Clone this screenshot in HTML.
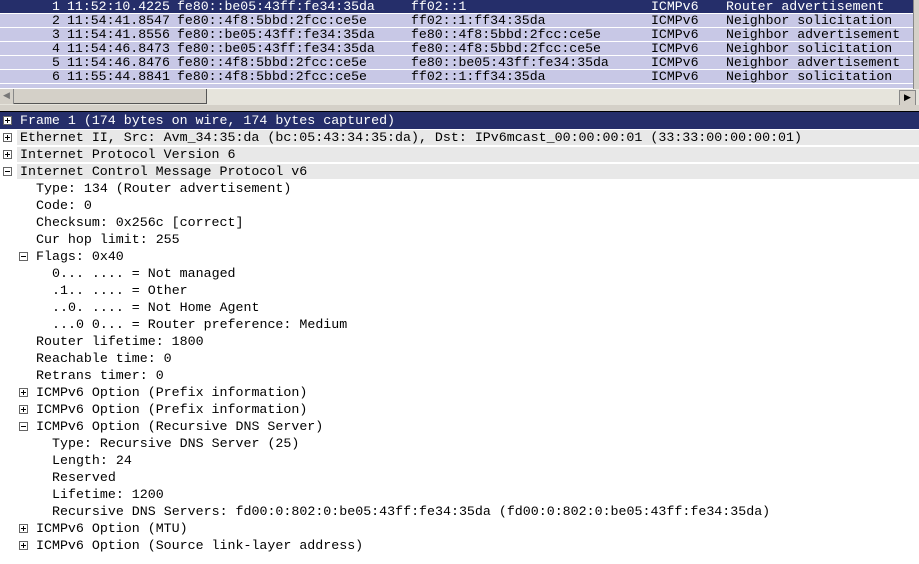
<!DOCTYPE html>
<html><head><style>
body{margin:0;width:919px;height:564px;overflow:hidden;background:#fff;font-family:"Liberation Mono",monospace;font-size:13px;position:relative}
.pr{position:absolute;left:0;width:913px;height:13px;background:#c8c8e6;color:#000;line-height:13px;white-space:pre;font-size:13.2px}
.pr.sel{background:#252e6a;color:#fff}
.pr span{position:absolute;top:0}
.t{position:absolute;height:17px;line-height:17px;white-space:pre;color:#000;font-size:13.3px}
.bg{position:absolute;left:17px;right:0;height:15px;background:#e8e8e8}
.box{position:absolute;width:7px;height:7px;border:1px solid #666;background:#fff}
.box:before{content:"";position:absolute;left:1px;top:3px;width:5px;height:1px;background:#000}
.box.p:after{content:"";position:absolute;left:3px;top:1px;width:1px;height:5px;background:#000}
</style></head><body>
<div class="pr sel" style="top:0"><span style="left:52px">1</span><span style="left:67px">11:52:10.4225</span><span style="left:177px">fe80::be05:43ff:fe34:35da</span><span style="left:411px">ff02::1</span><span style="left:651px">ICMPv6</span><span style="left:726px">Router advertisement</span></div>
<div class="pr" style="top:14px"><span style="left:52px">2</span><span style="left:67px">11:54:41.8547</span><span style="left:177px">fe80::4f8:5bbd:2fcc:ce5e</span><span style="left:411px">ff02::1:ff34:35da</span><span style="left:651px">ICMPv6</span><span style="left:726px">Neighbor solicitation</span></div>
<div class="pr" style="top:28px"><span style="left:52px">3</span><span style="left:67px">11:54:41.8556</span><span style="left:177px">fe80::be05:43ff:fe34:35da</span><span style="left:411px">fe80::4f8:5bbd:2fcc:ce5e</span><span style="left:651px">ICMPv6</span><span style="left:726px">Neighbor advertisement</span></div>
<div class="pr" style="top:42px"><span style="left:52px">4</span><span style="left:67px">11:54:46.8473</span><span style="left:177px">fe80::be05:43ff:fe34:35da</span><span style="left:411px">fe80::4f8:5bbd:2fcc:ce5e</span><span style="left:651px">ICMPv6</span><span style="left:726px">Neighbor solicitation</span></div>
<div class="pr" style="top:56px"><span style="left:52px">5</span><span style="left:67px">11:54:46.8476</span><span style="left:177px">fe80::4f8:5bbd:2fcc:ce5e</span><span style="left:411px">fe80::be05:43ff:fe34:35da</span><span style="left:651px">ICMPv6</span><span style="left:726px">Neighbor advertisement</span></div>
<div class="pr" style="top:70px"><span style="left:52px">6</span><span style="left:67px">11:55:44.8841</span><span style="left:177px">fe80::4f8:5bbd:2fcc:ce5e</span><span style="left:411px">ff02::1:ff34:35da</span><span style="left:651px">ICMPv6</span><span style="left:726px">Neighbor solicitation</span></div>
<div class="pr" style="top:84px;height:4px"></div>
<div style="position:absolute;left:913px;top:0;width:6px;height:90px;background:#d4d0c8;border-left:1px solid #888"></div>
<div style="position:absolute;left:0;top:89px;width:919px;height:16px;background:#e6e4dc"></div>
<div style="position:absolute;left:0;top:89px;width:13px;height:15px;background:#d4d0c8;border-right:1px solid #888;color:#777;font-size:9px;line-height:15px;text-align:center">◀</div>
<div style="position:absolute;left:14px;top:89px;width:192px;height:14px;background:#d4d0c8;border-right:1px solid #555;border-bottom:1px solid #555"></div>
<div style="position:absolute;left:899px;top:90px;width:15px;height:14px;background:#d4d0c8;border:1px solid #888;color:#000;font-size:9px;line-height:14px;text-align:center">▶</div>
<div style="position:absolute;left:0;top:105px;width:919px;height:6px;background:#d4d0c8"></div>
<div style="position:absolute;left:0;top:111px;width:919px;height:1px;background:#000"></div>
<div style="position:absolute;left:0;top:112px;width:919px;height:17px;background:#252e6a"></div>
<div id="tree"></div>
<script>
var rows=[
[0,'p','Frame 1 (174 bytes on wire, 174 bytes captured)',1],
[0,'p','Ethernet II, Src: Avm_34:35:da (bc:05:43:34:35:da), Dst: IPv6mcast_00:00:00:01 (33:33:00:00:00:01)'],
[0,'p','Internet Protocol Version 6'],
[0,'m','Internet Control Message Protocol v6'],
[1,'','Type: 134 (Router advertisement)'],
[1,'','Code: 0'],
[1,'','Checksum: 0x256c [correct]'],
[1,'','Cur hop limit: 255'],
[1,'m','Flags: 0x40'],
[2,'','0... .... = Not managed'],
[2,'','.1.. .... = Other'],
[2,'','..0. .... = Not Home Agent'],
[2,'','...0 0... = Router preference: Medium'],
[1,'','Router lifetime: 1800'],
[1,'','Reachable time: 0'],
[1,'','Retrans timer: 0'],
[1,'p','ICMPv6 Option (Prefix information)'],
[1,'p','ICMPv6 Option (Prefix information)'],
[1,'m','ICMPv6 Option (Recursive DNS Server)'],
[2,'','Type: Recursive DNS Server (25)'],
[2,'','Length: 24'],
[2,'','Reserved'],
[2,'','Lifetime: 1200'],
[2,'','Recursive DNS Servers: fd00:0:802:0:be05:43ff:fe34:35da (fd00:0:802:0:be05:43ff:fe34:35da)'],
[1,'p','ICMPv6 Option (MTU)'],
[1,'p','ICMPv6 Option (Source link-layer address)']];
var h='';
rows.forEach(function(r,i){var y=112+i*17;var x=20+r[0]*16;
if(r[0]==0&&!r[3])h+='<div class="bg" style="top:'+(y+1)+'px"></div>';
if(r[1])h+='<div class="box '+r[1]+'" style="left:'+(x-17)+'px;top:'+(y+4)+'px"></div>';
h+='<div class="t" style="left:'+x+'px;top:'+y+'px;'+(r[3]?'color:#fff':'')+'">'+r[2]+'</div>';});
document.getElementById('tree').innerHTML=h;
</script>
</body></html>
